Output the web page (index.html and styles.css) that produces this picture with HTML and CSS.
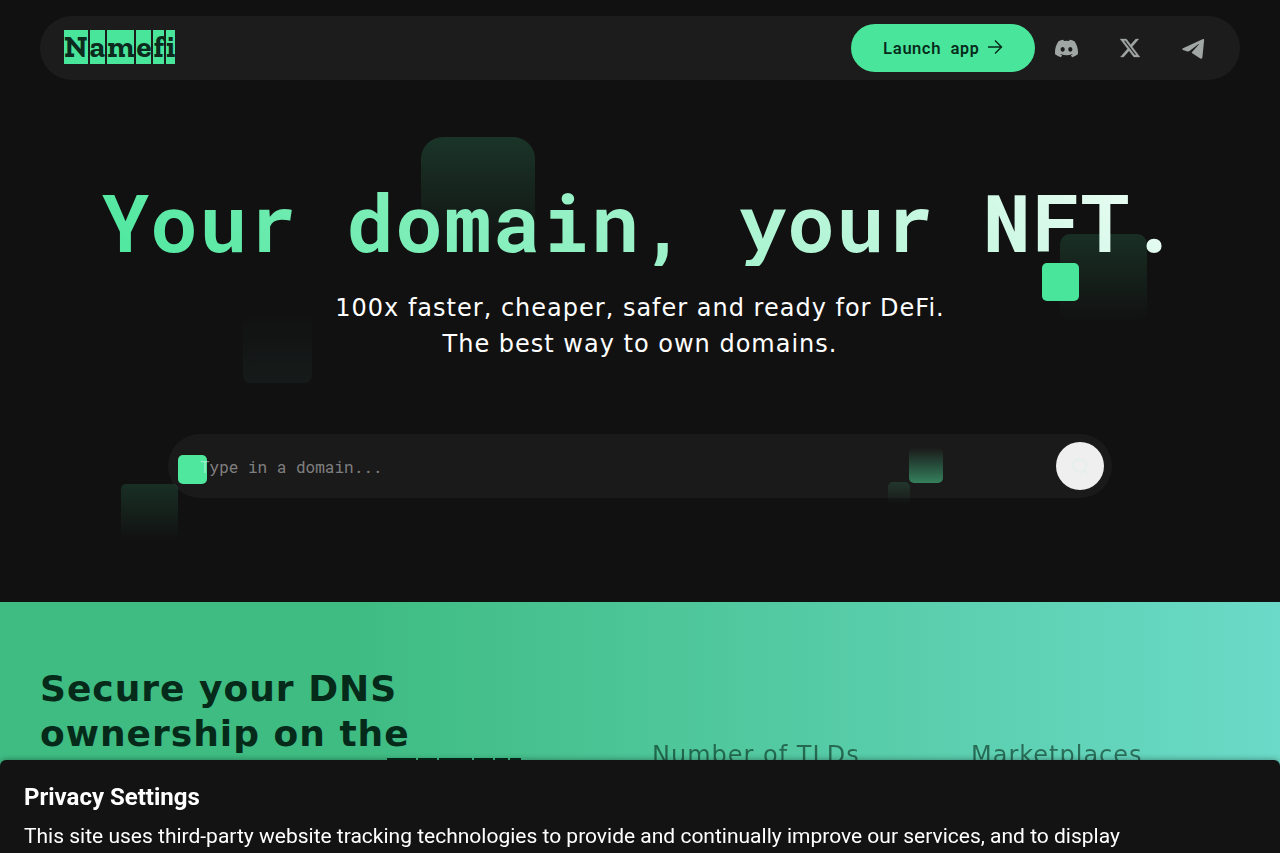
FILE: index.html
```html
<!DOCTYPE html>
<html lang="en">

<head>
  <meta charset="utf-8">
  <meta name="viewport" content="width=device-width, initial-scale=1.0">
  <title>Namefi</title>
  <link rel="stylesheet" href="styles.css">
</head>

<body>
  <header class="header">
    <nav class="navbar">
      <a href="#" class="logo" aria-label="Namefi"><span>N</span><span>a</span><span>m</span><span>e</span><span>f</span><span>i</span></a>
      <div class="nav-right">
        <a href="#" class="launch">Launch app
          <svg width="16" height="16" viewBox="0 0 16 16" fill="none" stroke="currentColor" stroke-width="1.4">
            <path d="M1 8h13M8 1.500l6.500 6.500L8 14.500" />
          </svg>
        </a>
        <a href="#" class="social" aria-label="Discord">
          <svg width="23" height="23" viewBox="0 0 16 16" fill="currentColor">
            <path d="M13.545 2.907a13.2 13.2 0 0 0-3.257-1.011.05.05 0 0 0-.052.025c-.141.25-.297.577-.406.833a12.2 12.2 0 0 0-3.658 0 8 8 0 0 0-.412-.833.05.05 0 0 0-.052-.025c-1.125.194-2.22.534-3.257 1.011a.04.04 0 0 0-.021.018C.356 6.024-.213 9.047.066 12.032q.003.022.021.037a13.3 13.3 0 0 0 3.995 2.02.05.05 0 0 0 .056-.019q.463-.63.818-1.329a.05.05 0 0 0-.01-.059l-.018-.011a9 9 0 0 1-1.248-.595.05.05 0 0 1-.02-.066l.015-.019q.127-.095.248-.195a.05.05 0 0 1 .051-.007c2.619 1.196 5.454 1.196 8.041 0a.05.05 0 0 1 .053.007q.121.1.248.195a.05.05 0 0 1-.004.085 8 8 0 0 1-1.249.594.05.05 0 0 0-.03.03.05.05 0 0 0 .003.041c.24.465.515.909.817 1.329a.05.05 0 0 0 .056.019 13.2 13.2 0 0 0 4.001-2.02.05.05 0 0 0 .021-.037c.334-3.451-.559-6.449-2.366-9.106a.03.03 0 0 0-.02-.019m-8.198 7.307c-.789 0-1.438-.724-1.438-1.612s.637-1.613 1.438-1.613c.807 0 1.450.73 1.438 1.613 0 .888-.637 1.612-1.438 1.612m5.316 0c-.788 0-1.438-.724-1.438-1.612s.637-1.613 1.438-1.613c.807 0 1.451.73 1.438 1.613 0 .888-.631 1.612-1.438 1.612" />
          </svg>
        </a>
        <a href="#" class="social" aria-label="X">
          <svg width="22" height="22" viewBox="0 0 24 24" fill="currentColor" stroke="currentColor" stroke-width="0.4">
            <path d="M18.244 2.250h3.308l-7.227 8.260 8.502 11.240H16.170l-5.214-6.817L4.990 21.750H1.680l7.730-8.835L1.254 2.250H8.080l4.713 6.231zm-1.161 17.520h1.833L7.084 4.126H5.117z" />
          </svg>
        </a>
        <a href="#" class="social" aria-label="Telegram">
          <svg width="24" height="24" viewBox="0 0 24 24" fill="currentColor">
            <path d="M2 12.200L21.500 3.200c1-.4 1.700.1 1.600 1.200l-1.700 16.800c-.2 1.400-1.300 1.900-2.500 1.100l-7.600-5c-.6-.4-.6-.9-.2-1.400l6.700-7.300c.3-.5-.1-.7-.5-.4L8.500 15.100c-.7.500-1.300.6-2.100.3L2 13.900c-1.100-.4-1.100-1.200 0-1.700z" />
          </svg>
        </a>
      </div>
    </nav>
  </header>

  <main>
    <section class="hero">
      <div class="squares" aria-hidden="true">
        <i class="sq sq1"></i>
        <i class="sq sq2"></i>
        <i class="sq sq3"></i>
        <i class="sq sq4"></i>
        <i class="sq sq5"></i>
        <i class="sq sq6"></i>
        <i class="sq sq7"></i>
        <i class="sq sq8"></i>
      </div>
      <h1>Your domain, your NFT.</h1>
      <p class="tagline">100x faster, cheaper, safer and ready for DeFi.<br>The best way to own domains.</p>
      <form class="search">
        <input type="text" placeholder="Type in a domain..." aria-label="Domain">
        <button type="button" aria-label="Search">
          <svg width="24" height="24" viewBox="0 0 24 24" fill="none" stroke="currentColor" stroke-width="2">
            <circle cx="11.500" cy="11.500" r="6.500" />
            <path d="M16 16l4 4" />
          </svg>
        </button>
      </form>
    </section>

    <section class="stats">
      <h2>Secure your DNS ownership on the<br>blockchain with <span class="logo logo-dark"><span>N</span><span>a</span><span>m</span><span>e</span><span>f</span><span>i</span></span></h2>
      <div class="stat">Number of TLDs</div>
      <div class="stat">Marketplaces</div>
    </section>
  </main>

  <aside class="privacy">
    <h3>Privacy Settings</h3>
    <p>This site uses third-party website tracking technologies to provide and continually improve our services, and to display</p>
  </aside>
</body>

</html>
```
FILE: styles.css
```css
* {
  box-sizing: border-box;
}

body {
  margin: 0;
  background-color: #111111;
  color: white;
  font-family: "DejaVu Sans", sans-serif;
}

a {
  text-decoration: none;
}

.header {
  padding: 16px 40px 0;
}

.navbar {
  display: flex;
  align-items: center;
  justify-content: space-between;
  height: 64px;
  padding: 0 16px 0 24px;
  border-radius: 32px;
  background-color: #1c1c1c;
}

.logo {
  display: inline-flex;
  gap: 2px;
  margin-bottom: 2px;
  color: #0c2a1d;
  font: bold 31px/34px "Zilla Slab", "DejaVu Serif", serif;
}

.logo span {
  background-color: #48e59b;
}

.nav-right {
  display: flex;
  align-items: center;
}

.launch {
  display: flex;
  align-items: center;
  gap: 8px;
  height: 48px;
  padding: 0 32px 2px;
  border-radius: 24px;
  background-color: #48e59b;
  color: #062a1a;
  font: 600 16px "Roboto Mono", "DejaVu Sans Mono", monospace;
}

.social {
  display: flex;
  justify-content: center;
  width: 63px;
  color: #a0a6a4;
}

.hero {
  position: relative;
  height: 522px;
  padding-top: 96px;
  text-align: center;
}

h1 {
  position: relative;
  width: fit-content;
  margin: 0 auto;
  font: bold 80px/90px "Roboto Mono", "DejaVu Sans Mono", monospace;
  letter-spacing: 1px;
  color: transparent;
  background: linear-gradient(45deg, #4ce79d, #f0fdf7);
  background-clip: text;
  -webkit-background-clip: text;
}

.tagline {
  position: relative;
  margin: 24px 0 0;
  font-size: 24px;
  line-height: 36px;
  letter-spacing: 1px;
}

.search {
  position: relative;
  display: flex;
  align-items: center;
  max-width: 944px;
  height: 64px;
  margin: 72px auto 0;
  padding: 0 8px 0 32px;
  border-radius: 32px;
  background-color: rgba(255, 255, 255, 0.04);
}

.search input {
  flex: 1;
  padding: 0;
  border: none;
  outline: none;
  background: none;
  color: white;
  font: 16px "Roboto Mono", "DejaVu Sans Mono", monospace;
}

.search input::placeholder {
  color: rgba(255, 255, 255, 0.45);
}

.search button {
  display: flex;
  align-items: center;
  justify-content: center;
  width: 48px;
  height: 48px;
  padding: 0;
  border: none;
  border-radius: 50%;
  background-color: #efefef;
  color: #e6efeb;
}

/* floating squares behind the hero */
.sq {
  position: absolute;
  border-radius: 5px;
  background: linear-gradient(rgba(72, 229, 155, 0.14), rgba(72, 229, 155, 0));
}

.sq1 {
  left: 421px;
  top: 57px;
  width: 114px;
  height: 114px;
  border-radius: 22px;
  background: linear-gradient(rgba(72, 229, 155, 0.17), rgba(72, 229, 155, 0));
}

.sq2 {
  left: 1060px;
  top: 154px;
  width: 87px;
  height: 87px;
  border-radius: 10px;
}

.sq3 {
  left: 1042px;
  top: 183px;
  width: 37px;
  height: 38px;
  background: #48e59b;
}

.sq4 {
  left: 243px;
  top: 234px;
  width: 69px;
  height: 69px;
  border-radius: 8px;
  background: linear-gradient(rgba(107, 218, 200, 0), rgba(107, 218, 200, 0.05));
}

.sq5 {
  left: 178px;
  top: 375px;
  width: 29px;
  height: 29px;
  background: #48e59b;
}

.sq6 {
  left: 121px;
  top: 404px;
  width: 57px;
  height: 57px;
}

.sq7 {
  left: 909px;
  top: 368px;
  width: 34px;
  height: 35px;
  background: linear-gradient(rgba(72, 229, 155, 0), rgba(72, 229, 155, 0.5));
}

.sq8 {
  left: 888px;
  top: 402px;
  width: 22px;
  height: 22px;
}

.stats {
  display: grid;
  grid-template-columns: 580px 287px 1fr;
  gap: 32px;
  min-height: 320px;
  padding: 64px 40px;
  background: linear-gradient(90deg, #3fbc82 28%, #6bdac8);
  color: #062a1a;
}

h2 {
  max-width: 520px;
  margin: 0;
  font-size: 36px;
  line-height: 45px;
  letter-spacing: 1px;
}

.logo-dark {
  margin: 2px 0 0;
  color: #3fbc82;
  font-size: 38px;
  line-height: 41px;
  letter-spacing: 0;
  vertical-align: top;
}

.logo-dark span {
  background-color: #062a1a;
}

.stat {
  padding-top: 71px;
  font-size: 24px;
  line-height: 36px;
  letter-spacing: 1px;
  opacity: 0.6;
}

.privacy {
  position: fixed;
  left: 0;
  right: 0;
  bottom: 0;
  padding: 20px 24px 0;
  border-radius: 6px 6px 0 0;
  background-color: #131313;
  box-shadow: 0 0 6px rgba(0, 0, 0, 0.4);
  font-family: Roboto, sans-serif;
}

.privacy h3 {
  margin: 0 0 6px;
  font-size: 24px;
  line-height: 34px;
}

.privacy p {
  margin: 0;
  font-size: 21px;
  line-height: 33px;
}
```
